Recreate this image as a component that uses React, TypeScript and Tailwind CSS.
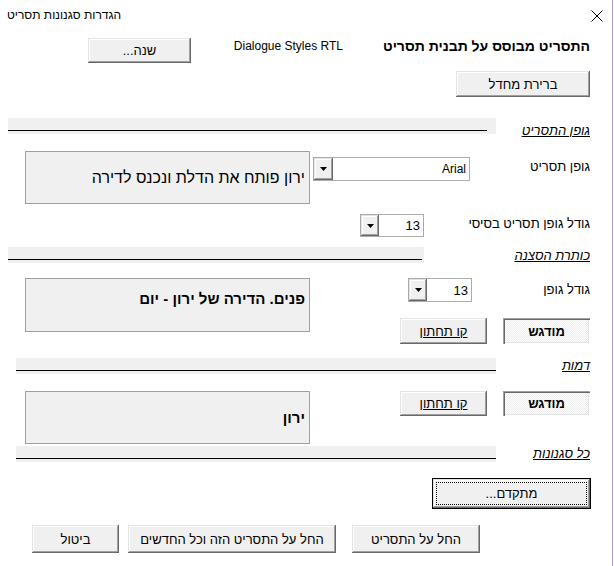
import React from "react";

// Classic 3D bevels
const raised =
  "bg-[#f0f0f0] shadow-[inset_-1px_-1px_0_#696969,inset_1px_1px_0_#e3e3e3,inset_-2px_-2px_0_#a0a0a0,inset_2px_2px_0_#ffffff]";
const sunken =
  "bg-[repeating-conic-gradient(#ffffff_0_25%,#ececec_0_50%)] bg-size-[2px_2px] shadow-[inset_1px_1px_0_#a0a0a0,inset_2px_2px_0_#696969,inset_-1px_-1px_0_#ffffff,inset_-2px_-2px_0_#e3e3e3]";

function Button({
  className,
  children,
}: {
  className: string;
  children: React.ReactNode;
}) {
  return (
    <div className={`${raised} ${className} flex shrink-0 items-center justify-center`}>
      {children}
    </div>
  );
}

function Toggle({ className }: { className: string }) {
  return (
    <div className={`${sunken} ${className} flex shrink-0 items-center justify-center font-bold`}>
      מודגש
    </div>
  );
}

function Arrow() {
  return (
    <svg width="7" height="4" viewBox="0 0 7 4">
      <path d="M0 0 H7 L3.5 4 Z" fill="#000" />
    </svg>
  );
}

function Combo({
  className,
  value,
  valueClass,
  btnClass,
}: {
  className: string;
  value: string;
  valueClass: string;
  btnClass: string;
}) {
  return (
    <div className={`${className} flex shrink-0 border border-[#ababab] bg-white`}>
      <div className={`flex flex-1 items-center pr-[3px] ${valueClass}`} dir="ltr">
        <span className="ml-auto">{value}</span>
      </div>
      <div className={`${raised} ${btnClass} flex h-full items-center justify-center`}>
        <Arrow />
      </div>
    </div>
  );
}

function Preview({
  className,
  children,
}: {
  className: string;
  children: React.ReactNode;
}) {
  return (
    <div className={`${className} flex shrink-0 border border-[#a0a0a0] bg-[#f0f0f0] pr-[4px]`}>
      {children}
    </div>
  );
}

function Section({
  label,
  mt,
  labelClass,
  barClass,
  lineClass,
}: {
  label: string;
  mt: string;
  labelClass: string;
  barClass: string;
  lineClass: string;
}) {
  return (
    <div className={`${mt} flex h-[16px] items-start`}>
      <div className={`${labelClass} h-[16px] shrink-0 italic underline`}>{label}</div>
      <div className={`${barClass} flex h-[16px] shrink-0 flex-col justify-end bg-[#f0f0f0] pb-[3px]`}>
        <div className={`${lineClass} h-px self-end bg-black`} />
      </div>
    </div>
  );
}

export default function App() {
  return (
    <div className="h-[566px] w-[614px] bg-white font-['Liberation_Sans',Arial,'DejaVu_Sans',sans-serif] text-[13px] leading-[15px] text-black">
      <div className="flex h-full w-[613px] flex-col border-r border-[#a6a6e6]">
        {/* title bar */}
        <div className="flex h-[31px] items-center justify-between pl-[7px] pr-[9px]" dir="ltr">
          <span dir="rtl" className="text-[12px]">
            הגדרות סגנונות תסריט
          </span>
          <svg width="12" height="12" viewBox="0 0 12 12">
            <path d="M0.5 0.5 L11.5 11.5 M11.5 0.5 L0.5 11.5" stroke="#000" strokeWidth="1" />
          </svg>
        </div>

        <div dir="rtl" className="flex flex-col pr-[22px]">
          {/* template row */}
          <div className="mt-[7px] flex h-[25px] items-start">
            <div className="w-[247px] shrink-0 text-[14px] font-bold leading-[16px]">
              התסריט מבוסס על תבנית תסריט
            </div>
            <div className="w-[152px] shrink-0 pt-[1px] text-right text-[12px]" dir="ltr">
              Dialogue Styles RTL
            </div>
            <Button className="h-[25px] w-[103px]">שנה...</Button>
          </div>

          <div className="mt-[8px] flex">
            <Button className="h-[26px] w-[134px]">ברירת מחדל</Button>
          </div>

          {/* script body */}
          <Section
            label="גופן התסריט"
            mt="mt-[21px]"
            labelClass="w-[94px] pt-[5px]"
            barClass="w-[488px]"
            lineClass="w-[479px]"
          />

          <div className="mt-[17px] flex items-start">
            <div className="w-[120px] shrink-0 pt-[8px]">גופן תסריט</div>
            <Combo
              className="mt-[6px] h-[24px] w-[157px]"
              value="Arial"
              valueClass="text-[12px]"
              btnClass="w-[19px]"
            />
            <div className="w-[3px] shrink-0" />
            <Preview className="h-[53px] w-[285px] items-center text-[16px] leading-[18px]">
              ירון פותח את הדלת ונכנס לדירה
            </Preview>
          </div>

          <div className="mt-[10px] flex items-start">
            <div className="w-[166px] shrink-0 pt-[2px]">גודל גופן תסריט בסיסי</div>
            <Combo className="h-[23px] w-[64px]" value="13" valueClass="text-[13px]" btnClass="w-[18px]" />
          </div>

          {/* scene heading */}
          <Section
            label="כותרת הסצנה"
            mt="mt-[10px]"
            labelClass="w-[166px] pt-[1px]"
            barClass="w-[416px]"
            lineClass="w-[414px]"
          />

          <div className="mt-[15px] flex items-start">
            <div className="flex w-[190px] shrink-0 flex-col">
              <div className="flex h-[24px]">
                <div className="w-[118px] shrink-0 pt-[4px]">גודל גופן</div>
                <Combo className="h-[24px] w-[64px]" value="13" valueClass="text-[13px]" btnClass="w-[18px]" />
              </div>
              <div className="mt-[16px] flex">
                <Toggle className="h-[26px] w-[87px]" />
                <div className="w-[16px] shrink-0" />
                <Button className="h-[26px] w-[87px] underline">קו תחתון</Button>
              </div>
            </div>
            <div className="w-[90px] shrink-0" />
            <Preview className="h-[54px] w-[285px] pt-[11px] text-[15px] leading-[17px] font-bold">
              פנים. הדירה של ירון - יום
            </Preview>
          </div>

          {/* character */}
          <Section
            label="דמות"
            mt="mt-[14px]"
            labelClass="w-[94px] pt-0"
            barClass="w-[480px]"
            lineClass="w-[480px]"
          />

          <div className="mt-[17px] flex items-start">
            <Toggle className="h-[25px] w-[87px]" />
            <div className="w-[16px] shrink-0" />
            <Button className="h-[25px] w-[87px] underline">קו תחתון</Button>
            <div className="w-[90px] shrink-0" />
            <Preview className="h-[53px] w-[285px] items-center text-[15px] leading-[17px] font-bold">
              ירון
            </Preview>
          </div>

          {/* all styles */}
          <Section
            label="כל סגנונות"
            mt="mt-[2px]"
            labelClass="w-[94px] pt-0"
            barClass="w-[480px]"
            lineClass="w-[480px]"
          />

          <div className="mt-[16px] flex">
            <div className="-mr-px h-[31px] w-[159px] shrink-0 border border-black">
              <div className={`${raised} h-full w-full p-[3px]`}>
                <div className="flex h-full w-full items-center justify-center border border-dotted border-black">
                  מתקדם...
                </div>
              </div>
            </div>
          </div>

          <div className="mt-[16px] mr-[110px] flex">
            <Button className="h-[28px] w-[128px]">החל על התסריט</Button>
            <div className="w-[16px] shrink-0" />
            <Button className="h-[28px] w-[208px]">החל על התסריט הזה וכל החדשים</Button>
            <div className="w-[9px] shrink-0" />
            <Button className="h-[28px] w-[87px]">ביטול</Button>
          </div>
        </div>
      </div>
    </div>
  );
}
